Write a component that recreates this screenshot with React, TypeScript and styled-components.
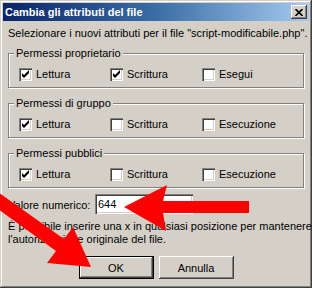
import React from 'react';
import styled, { createGlobalStyle } from 'styled-components';

const GlobalStyle = createGlobalStyle`
  html, body {
    margin: 0;
    padding: 0;
    background: #d4d0c8;
  }
  body {
    font-family: "Liberation Sans", Arial, sans-serif;
  }
`;

const Window = styled.div`
  position: relative;
  width: 312px;
  height: 288px;
  box-sizing: border-box;
  padding: 3px;
  background: #d4d0c8;
  box-shadow: inset -1px -1px 0 #404040, inset 1px 1px 0 #d4d0c8,
    inset -2px -2px 0 #808080, inset 2px 2px 0 #ffffff;
  display: flex;
  flex-direction: column;
  font-size: 11px;
  color: #000;
  overflow: hidden;
`;

const TitleBar = styled.div`
  height: 18px;
  display: flex;
  align-items: center;
  justify-content: space-between;
  padding: 0 2px 0 2px;
  background: linear-gradient(90deg, #0a246a 0%, #3a6ea5 50%, #a6caf0 100%);
`;

const Title = styled.span`
  color: #fff;
  font-weight: bold;
  font-size: 11px;
  line-height: 18px;
  white-space: nowrap;
`;

const CloseButton = styled.div`
  width: 16px;
  height: 14px;
  box-sizing: border-box;
  background: #d4d0c8;
  box-shadow: inset -1px -1px 0 #404040, inset 1px 1px 0 #ffffff,
    inset -2px -2px 0 #808080;
  display: flex;
  align-items: center;
  justify-content: center;
`;

const Content = styled.div`
  padding: 0 5px;
  display: flex;
  flex-direction: column;
`;

const Intro = styled.p`
  margin: 6px 0 0;
  line-height: 13px;
  white-space: nowrap;
`;

const Group = styled.fieldset<{ $first?: boolean }>`
  margin: ${p => (p.$first ? '7px' : '9px')} 0 0;
  padding: 8px 0 6px 10px;
  min-width: 0;
  border: 1px solid #808080;
  box-shadow: inset 1px 1px 0 #ffffff, 1px 1px 0 #ffffff;
`;

const Legend = styled.legend`
  padding: 0 2px;
  margin-left: -5px;
  line-height: 13px;
  background: #d4d0c8;
`;

const Row = styled.div`
  display: grid;
  grid-template-columns: 91px 92px 1fr;
  height: 13px;
`;

const Option = styled.label`
  display: flex;
  align-items: center;
  gap: 4px;
  line-height: 13px;
`;

const Box = styled.span`
  width: 13px;
  height: 13px;
  flex: none;
  background: #fff;
  box-shadow: inset 1px 1px 0 #808080, inset 2px 2px 0 #404040,
    inset -1px -1px 0 #ffffff, inset -2px -2px 0 #d4d0c8;
  display: block;
`;

const ValueRow = styled.div`
  display: flex;
  align-items: center;
  margin-top: 6px;
`;

const ValueLabel = styled.span`
  width: 87px;
  line-height: 13px;
  padding-top: 3px;
`;

const Input = styled.div`
  width: 98px;
  height: 20px;
  box-sizing: border-box;
  padding: 3px 0 0 3px;
  background: #fff;
  box-shadow: inset 1px 1px 0 #808080, inset 2px 2px 0 #404040,
    inset -1px -1px 0 #ffffff, inset -2px -2px 0 #d4d0c8;
  line-height: 14px;
`;

const Help = styled.p`
  margin: 6px 0 0;
  line-height: 13px;
  white-space: nowrap;
`;

const Buttons = styled.div`
  display: flex;
  justify-content: center;
  gap: 5px;
  margin-top: 10px;
`;

const Button = styled.button<{ $default?: boolean }>`
  width: 75px;
  height: 23px;
  box-sizing: border-box;
  padding: 0;
  font: inherit;
  color: #000;
  background: #d4d0c8;
  border: ${p => (p.$default ? '1px solid #000' : 'none')};
  box-shadow: ${p =>
    p.$default
      ? 'inset -1px -1px 0 #404040, inset 1px 1px 0 #ffffff, inset -2px -2px 0 #808080'
      : 'inset -1px -1px 0 #404040, inset 1px 1px 0 #ffffff, inset -2px -2px 0 #808080, inset 2px 2px 0 #d4d0c8'};
`;

const Overlay = styled.svg`
  position: absolute;
  left: 0;
  top: 0;
  pointer-events: none;
`;

const Check: React.FC<{ on: boolean }> = ({ on }) => (
  <Box>
    {on && (
      <svg width="13" height="13" viewBox="0 0 13 13">
        <path d="M3 5 L5 7 L10 2 L10 5 L5 10 L3 8 Z" fill="#000" />
      </svg>
    )}
  </Box>
);

type Perm = { label: string; on: boolean };

const groups: { title: string; perms: Perm[] }[] = [
  {
    title: 'Permessi proprietario',
    perms: [
      { label: 'Lettura', on: true },
      { label: 'Scrittura', on: true },
      { label: 'Esegui', on: false },
    ],
  },
  {
    title: 'Permessi di gruppo',
    perms: [
      { label: 'Lettura', on: true },
      { label: 'Scrittura', on: false },
      { label: 'Esecuzione', on: false },
    ],
  },
  {
    title: 'Permessi pubblici',
    perms: [
      { label: 'Lettura', on: true },
      { label: 'Scrittura', on: false },
      { label: 'Esecuzione', on: false },
    ],
  },
];

export default function App() {
  return (
    <Window>
      <GlobalStyle />
      <TitleBar>
        <Title>Cambia gli attributi del file</Title>
        <CloseButton>
          <svg width="8" height="7" viewBox="0 0 8 7">
            <path d="M0.5 0 L7.5 7 M7.5 0 L0.5 7" stroke="#000" strokeWidth="1.6" />
          </svg>
        </CloseButton>
      </TitleBar>
      <Content>
        <Intro>Selezionare i nuovi attributi per il file "script-modificabile.php".</Intro>
        {groups.map((g, i) => (
          <Group key={g.title} $first={i === 0}>
            <Legend>{g.title}</Legend>
            <Row>
              {g.perms.map(p => (
                <Option key={p.label}>
                  <Check on={p.on} />
                  {p.label}
                </Option>
              ))}
            </Row>
          </Group>
        ))}
        <ValueRow>
          <ValueLabel>Valore numerico:</ValueLabel>
          <Input>644</Input>
        </ValueRow>
        <Help>
          È possibile inserire una x in qualsiasi posizione per mantenere
          <br />
          l'autorizzazione originale del file.
        </Help>
        <Buttons>
          <Button $default>OK</Button>
          <Button>Annulla</Button>
        </Buttons>
      </Content>
      <Overlay width="312" height="288" viewBox="0 0 312 288">
        <polygon
          points="124,207 167,185 163,201 249,201 249,213 163,213 166,231"
          fill="#ff0000"
        />
        <polygon
          points="-16,182 64,239 73,227 91,267 47,263 56,251 -24,193"
          fill="#ff0000"
        />
      </Overlay>
    </Window>
  );
}
